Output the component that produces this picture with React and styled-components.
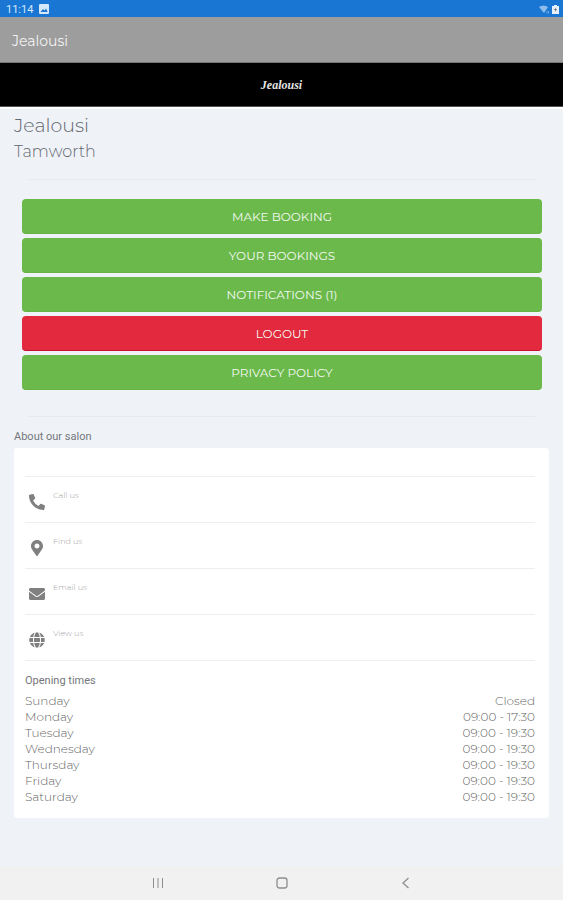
import React from 'react';
import styled, { createGlobalStyle, ThemeProvider } from 'styled-components';
import { FaPhoneAlt, FaMapMarkerAlt, FaEnvelope, FaGlobe } from 'react-icons/fa';

const theme = {
  status: '#1976d2',
  header: '#9d9d9d',
  page: '#eff3f8',
  green: '#6bb84b',
  red: '#e3293d',
  heading: '#63676e',
  text: '#666666',
  muted: '#a0a0a0',
  icon: '#808080',
  line: '#eeeeee',
};

const GlobalStyle = createGlobalStyle`
  *, *::before, *::after {
    box-sizing: border-box;
  }
  body {
    background: ${({ theme }) => theme.page};
    font-family: Montserrat, Inter, sans-serif;
    margin: 0;
  }
`;

const Screen = styled.div`
  display: flex;
  flex-direction: column;
  min-height: 100vh;
`;

const StatusBar = styled.div`
  align-items: center;
  background: ${({ theme }) => theme.status};
  color: #d5e8fa;
  display: flex;
  font-family: Roboto, sans-serif;
  font-size: 11px;
  height: 17px;
  justify-content: space-between;
  padding: 1px 4px 0 6px;
  svg {
    display: block;
  }
`;

const StatusGroup = styled.div`
  align-items: center;
  display: flex;
  gap: ${({ $gap }) => $gap}px;
`;

const AppHeader = styled.header`
  align-items: center;
  background: ${({ theme }) => theme.header};
  border-bottom: 1px solid #777;
  color: #f2f2f2;
  display: flex;
  font-size: 14px;
  height: 46px;
  padding: 2px 12px 0;
`;

const Banner = styled.div`
  align-items: center;
  background: #000;
  border-bottom: 1px solid #555;
  color: #e6e6e6;
  display: flex;
  font-family: "Brush Script MT", "Liberation Serif", cursive;
  font-size: 12px;
  font-style: italic;
  font-weight: 700;
  height: 44px;
  justify-content: center;
  padding-top: 2px;
`;

const Main = styled.main`
  border-top: 2px solid #fff;
  flex: 1;
  padding: 5px 14px 48px;
`;

const SalonName = styled.h1`
  color: ${({ theme }) => theme.heading};
  font-size: 19px;
  font-weight: 300;
  line-height: 24px;
  margin: 0;
`;

const SalonTown = styled.h2`
  color: ${({ theme }) => theme.heading};
  font-size: 16px;
  font-weight: 300;
  line-height: 20px;
  margin: 4px 0 17px;
`;

const Divider = styled.hr`
  border: 0;
  border-top: 1px solid #e7ebf0;
  margin: 0 14px;
`;

const Actions = styled.div`
  display: flex;
  flex-direction: column;
  gap: 4px;
  padding: 19px 7px 26px 8px;
`;

const ActionButton = styled.button`
  background: ${({ theme, $danger }) => ($danger ? theme.red : theme.green)};
  border: 0;
  border-bottom: 1px solid ${({ $danger }) => ($danger ? '#c8102a' : '#66b346')};
  border-radius: 4px;
  color: #f4faf1;
  cursor: pointer;
  font-family: inherit;
  font-size: 12px;
  height: 35px;
  padding: 0;
  text-transform: uppercase;
`;

const SectionTitle = styled.h3`
  color: #74777b;
  font-family: Roboto, sans-serif;
  font-size: 11px;
  font-weight: 400;
  line-height: 16px;
  margin: ${({ $margin }) => $margin};
`;

const Card = styled.section`
  background: #fff;
  border-radius: 3px;
  padding: 28px 14px 13px 11px;
`;

const ContactList = styled.ul`
  border-top: 1px solid ${({ theme }) => theme.line};
  list-style: none;
  margin: 0;
  padding: 0;
`;

const ContactLink = styled.a`
  border-bottom: 1px solid ${({ theme }) => theme.line};
  color: ${({ theme }) => theme.muted};
  display: flex;
  font-size: 8px;
  font-weight: 300;
  gap: 8px;
  height: 46px;
  line-height: 12px;
  padding: 12px 0 0 4px;
  text-decoration: none;
  svg {
    color: ${({ theme }) => theme.icon};
    height: 16px;
    margin-top: 5px;
    width: 16px;
  }
`;

const Times = styled.table`
  border-collapse: collapse;
  color: ${({ theme }) => theme.text};
  font-size: 12px;
  font-weight: 300;
  line-height: 16px;
  width: 100%;
  th, td {
    font-weight: inherit;
    padding: 0;
    text-align: left;
  }
  td {
    text-align: right;
  }
`;

const NavBar = styled.nav`
  align-items: center;
  background: #f1f1f1;
  display: flex;
  height: 34px;
  justify-content: center;
  gap: 100px;
`;

const NavButton = styled.button`
  background: none;
  border: 0;
  color: #8e8e8e;
  cursor: pointer;
  height: 24px;
  padding: 5px;
  width: 24px;
  svg {
    display: block;
  }
`;

const actions = [
  { label: 'Make booking' },
  { label: 'Your bookings' },
  { label: 'Notifications (1)' },
  { label: 'Logout', danger: true },
  { label: 'Privacy policy' },
];

const contacts = [
  { label: 'Call us', icon: FaPhoneAlt },
  { label: 'Find us', icon: FaMapMarkerAlt },
  { label: 'Email us', icon: FaEnvelope },
  { label: 'View us', icon: FaGlobe },
];

const times = [
  ['Sunday', 'Closed'],
  ['Monday', '09:00 - 17:30'],
  ['Tuesday', '09:00 - 19:30'],
  ['Wednesday', '09:00 - 19:30'],
  ['Thursday', '09:00 - 19:30'],
  ['Friday', '09:00 - 19:30'],
  ['Saturday', '09:00 - 19:30'],
];

const Status = () => (
  <StatusBar>
    <StatusGroup $gap={6}>
      <span>11:14</span>
      <svg width="10" height="10" viewBox="0 0 10 10" aria-hidden="true">
        <rect width="10" height="10" rx="1" fill="#d5e8fa" />
        <path d="M1.500 8 4 5l1.500 1.500L7 4.500 8.700 8z" fill="#1976d2" />
      </svg>
    </StatusGroup>
    <StatusGroup $gap={3}>
      <svg width="10" height="9" viewBox="0 0 10 9" aria-hidden="true">
        <path d="M0 2q4.500-3 9 0L5 8z" fill="#8dbdec" />
        <path d="M8 6v2.500M9.500 6v2.500" stroke="#6aa7e4" />
      </svg>
      <svg width="7" height="9" viewBox="0 0 7 9" aria-hidden="true">
        <path d="M2 0h3v1h2v8H0V1h2z" fill="#e6f1fc" />
        <path d="M4 2.500 2 5h1.500L3 7l2-2.700H3.500z" fill="#555" />
      </svg>
    </StatusGroup>
  </StatusBar>
);

const SystemNav = () => (
  <NavBar>
    <NavButton aria-label="Recent apps">
      <svg width="14" height="14" viewBox="0 0 14 14" stroke="currentColor">
        <path d="M2.500 2v10M7 2v10M11.500 2v10" />
      </svg>
    </NavButton>
    <NavButton aria-label="Home">
      <svg width="14" height="14" viewBox="0 0 14 14" fill="none" stroke="currentColor" strokeWidth="1.300">
        <rect x="2" y="2" width="10" height="10" rx="2.500" />
      </svg>
    </NavButton>
    <NavButton aria-label="Back">
      <svg width="14" height="14" viewBox="0 0 14 14" fill="none" stroke="currentColor" strokeWidth="1.300">
        <path d="M9.500 2 4 7l5.500 5" />
      </svg>
    </NavButton>
  </NavBar>
);

const App = () => {

  return (
    <ThemeProvider theme={theme}>
      <GlobalStyle />
      <Screen>
        <Status />
        <AppHeader>Jealousi</AppHeader>
        <Banner>Jealousi</Banner>
        <Main>
          <SalonName>Jealousi</SalonName>
          <SalonTown>Tamworth</SalonTown>
          <Divider />
          <Actions>
            {actions.map(({ label, danger }) => (
              <ActionButton key={label} $danger={danger}>{label}</ActionButton>
            ))}
          </Actions>
          <Divider />
          <SectionTitle $margin="12px 0 3px">About our salon</SectionTitle>
          <Card>
            <ContactList>
              {contacts.map(({ label, icon: Icon }) => (
                <li key={label}>
                  <ContactLink href="#">
                    <Icon />
                    <span>{label}</span>
                  </ContactLink>
                </li>
              ))}
            </ContactList>
            <SectionTitle $margin="12px 0 4px">Opening times</SectionTitle>
            <Times>
              <tbody>
                {times.map(([day, hours]) => (
                  <tr key={day}>
                    <th scope="row">{day}</th>
                    <td>{hours}</td>
                  </tr>
                ))}
              </tbody>
            </Times>
          </Card>
        </Main>
        <SystemNav />
      </Screen>
    </ThemeProvider>
  );
};

export default App;
